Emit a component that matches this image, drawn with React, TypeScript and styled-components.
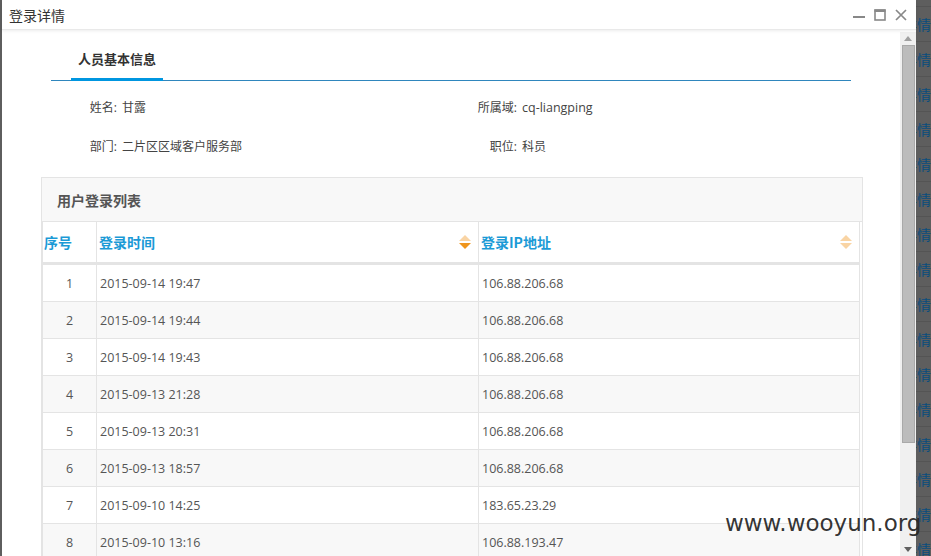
import {FunctionComponent} from 'react';
import styled, {createGlobalStyle} from 'styled-components';

const GlobalStyle = createGlobalStyle`
  html, body {
    margin: 0;
    padding: 0;
    width: 931px;
    height: 556px;
    overflow: hidden;
    background: #5e5e5e;
  }
  body {
    font-family: "Open Sans", "Noto Sans CJK SC", sans-serif;
    color: #555;
  }
  * {
    box-sizing: border-box;
  }
`;

const Page = styled.div`
  position: relative;
  display: flex;
  height: 556px;
  padding-left: 2px;
  overflow: hidden;
`;

const Window = styled.section`
  flex: none;
  width: 914px;
  height: 100%;
  background: #fff;
  display: flex;
  flex-direction: column;
`;

const TitleBar = styled.header`
  flex: none;
  height: 30px;
  display: flex;
  align-items: center;
  padding: 0 9px 0 7px;
  border-bottom: 1px solid #e9e9e9;
  box-shadow: 0 1px 3px rgba(0, 0, 0, 0.08);
  position: relative;
  z-index: 1;
`;

const Title = styled.h1`
  flex: 1;
  margin: 0;
  font-size: 14px;
  font-weight: normal;
  color: #333;
  font-family: "Noto Sans CJK SC", sans-serif;
`;

const WindowTools = styled.div`
  display: flex;
  align-items: center;
  gap: 9px;
`;

const WindowBody = styled.div`
  flex: 1;
  min-height: 0;
  display: flex;
  margin-top: 2px;
`;

const Content = styled.div`
  flex: 1;
  min-width: 0;
  overflow: hidden;
  padding-top: 9px;
`;

const TabBar = styled.nav`
  display: flex;
  margin-left: 49px;
  width: 800px;
  border-bottom: 1px solid #2f86bd;
`;

const Tab = styled.div<{active?: boolean}>`
  margin-bottom: -1px;
  margin-left: 20px;
  padding: 8px 7px 9px;
  line-height: 20px;
  font-size: 13px;
  font-weight: bold;
  color: #333;
  font-family: "Noto Sans CJK SC", sans-serif;
  border-bottom: 3px solid ${(p) => (p.active ? '#0096e0' : 'transparent')};
`;

const InfoGrid = styled.dl`
  display: grid;
  grid-template-columns: 62px 310px 80px 1fr;
  column-gap: 5px;
  row-gap: 19px;
  margin: 17px 0 0 53px;
  font-size: 12px;
  line-height: 20px;
  color: #444;
`;

const InfoLabel = styled.dt`
  text-align: right;
  margin: 0;
`;

const InfoValue = styled.dd<{latin?: boolean}>`
  margin: 0;
  font-size: ${(p) => (p.latin ? 12.5 : 12)}px;
`;

const Panel = styled.section`
  margin: 20px 0 0 39px;
  width: 822px;
  border: 1px solid #e4e4e4;
  background: #fff;
`;

const PanelHead = styled.div`
  height: 44px;
  display: flex;
  align-items: center;
  padding-left: 15px;
  background: #f8f8f8;
  border-bottom: 1px solid #e4e4e4;
  font-size: 14px;
  font-weight: bold;
  color: #555;
  font-family: "Noto Sans CJK SC", sans-serif;
`;

const Table = styled.div`
  width: 818px;
  border-left: 1px solid #e4e4e4;
`;

const HeadRow = styled.div`
  display: grid;
  grid-template-columns: 54px 382px 381px;
  height: 43px;
  border-bottom: 3px solid #e4e4e4;
  background: #fff;
`;

const HeadCell = styled.div`
  display: flex;
  align-items: center;
  justify-content: space-between;
  padding: 0 7px 0 2px;
  border-right: 1px solid #e4e4e4;
  font-size: 14px;
  font-weight: bold;
  color: #1b9ad6;
  font-family: "Noto Sans CJK SC", sans-serif;

  &:first-child {
    padding-left: 1px;
  }
`;

const Row = styled.div<{striped: boolean}>`
  display: grid;
  grid-template-columns: 54px 382px 381px;
  height: 37px;
  border-bottom: 1px solid #e4e4e4;
  background: ${(p) => (p.striped ? '#f8f8f8' : '#fff')};
`;

const Cell = styled.div<{center?: boolean}>`
  display: flex;
  align-items: center;
  justify-content: ${(p) => (p.center ? 'center' : 'flex-start')};
  padding-left: ${(p) => (p.center ? 0 : 3)}px;
  border-right: 1px solid #e4e4e4;
  font-size: 12.5px;
  color: #555;
`;

const Scrollbar = styled.div`
  flex: none;
  width: 16px;
  display: flex;
  flex-direction: column;
  align-items: center;
  background: #f0f0f0;
`;

const ScrollArrow = styled.div`
  flex: none;
  height: 13px;
  display: flex;
  align-items: center;
  justify-content: center;
`;

const Thumb = styled.div`
  flex: none;
  width: 13px;
  height: 398px;
  background: #bcbcbc;
  border: 1px solid #a9a9a9;
`;

const ScrollSpace = styled.div`
  flex: 1;
`;

const Backdrop = styled.aside`
  flex: 1;
  min-width: 0;
  overflow: hidden;
  margin-top: -28px;
`;

const BackdropRow = styled.div`
  height: 35px;
  display: flex;
  justify-content: flex-end;
  align-items: center;
  border-bottom: 1px solid rgba(0, 0, 0, 0.1);
  font-size: 14px;
  white-space: nowrap;
  color: #0a4d7d;
  font-family: "Noto Sans CJK SC", sans-serif;
`;

const Watermark = styled.div`
  position: absolute;
  left: 725px;
  top: 510px;
  font-family: "DejaVu Sans", sans-serif;
  font-size: 23px;
  color: rgba(40, 40, 40, 0.95);
  pointer-events: none;
`;

const SortIcon: FunctionComponent<{dir?: 'asc' | 'desc'}> = ({dir}) => (
  <svg width="12" height="15" viewBox="0 0 12 15">
    <polygon points="6,0 12,6 0,6" fill={dir === 'asc' ? '#ef951c' : '#f9d4a4'} />
    <polygon points="0,8 12,8 6,14" fill={dir === 'desc' ? '#ef951c' : '#f9d4a4'} />
  </svg>
);

const rows = [
  ['1', '2015-09-14 19:47', '106.88.206.68'],
  ['2', '2015-09-14 19:44', '106.88.206.68'],
  ['3', '2015-09-14 19:43', '106.88.206.68'],
  ['4', '2015-09-13 21:28', '106.88.206.68'],
  ['5', '2015-09-13 20:31', '106.88.206.68'],
  ['6', '2015-09-13 18:57', '106.88.206.68'],
  ['7', '2015-09-10 14:25', '183.65.23.29'],
  ['8', '2015-09-10 13:16', '106.88.193.47'],
];

const App: FunctionComponent = () => {
  return (
    <>
      <GlobalStyle />
      <Page>
        <Window>
          <TitleBar>
            <Title>登录详情</Title>
            <WindowTools>
              <svg width="12" height="12" viewBox="0 0 12 12">
                <rect x="0" y="7" width="12" height="2" fill="#888" />
              </svg>
              <svg width="12" height="12" viewBox="0 0 12 12">
                <rect x="1" y="1" width="10" height="10" fill="none" stroke="#888" strokeWidth="1.6" />
                <rect x="0.5" y="0.5" width="11" height="2.5" fill="#888" />
              </svg>
              <svg width="12" height="12" viewBox="0 0 12 12">
                <path d="M1 1 L11 11 M11 1 L1 11" stroke="#888" strokeWidth="1.7" />
              </svg>
            </WindowTools>
          </TitleBar>
          <WindowBody>
            <Content>
              <TabBar>
                <Tab active>人员基本信息</Tab>
              </TabBar>
              <InfoGrid>
                <InfoLabel>姓名:</InfoLabel>
                <InfoValue>甘露</InfoValue>
                <InfoLabel>所属域:</InfoLabel>
                <InfoValue latin>cq-liangping</InfoValue>
                <InfoLabel>部门:</InfoLabel>
                <InfoValue>二片区区域客户服务部</InfoValue>
                <InfoLabel>职位:</InfoLabel>
                <InfoValue>科员</InfoValue>
              </InfoGrid>
              <Panel>
                <PanelHead>用户登录列表</PanelHead>
                <Table>
                  <HeadRow>
                    <HeadCell>序号</HeadCell>
                    <HeadCell>
                      登录时间
                      <SortIcon dir="desc" />
                    </HeadCell>
                    <HeadCell>
                      登录IP地址
                      <SortIcon />
                    </HeadCell>
                  </HeadRow>
                  {rows.map(([no, time, ip], i) => (
                    <Row key={no} striped={i % 2 === 1}>
                      <Cell center>{no}</Cell>
                      <Cell>{time}</Cell>
                      <Cell>{ip}</Cell>
                    </Row>
                  ))}
                </Table>
              </Panel>
            </Content>
            <Scrollbar>
              <ScrollArrow>
                <svg width="8" height="5" viewBox="0 0 8 5">
                  <polygon points="4,0 8,5 0,5" fill="#a0a0a0" />
                </svg>
              </ScrollArrow>
              <Thumb />
              <ScrollSpace />
              <ScrollArrow>
                <svg width="8" height="5" viewBox="0 0 8 5">
                  <polygon points="0,0 8,0 4,5" fill="#606060" />
                </svg>
              </ScrollArrow>
            </Scrollbar>
          </WindowBody>
        </Window>
        <Backdrop>
          {Array.from({length: 18}).map((_, i) => (
            <BackdropRow key={i}>详情</BackdropRow>
          ))}
        </Backdrop>
        <Watermark>www.wooyun.org</Watermark>
      </Page>
    </>
  );
};

export default App;
